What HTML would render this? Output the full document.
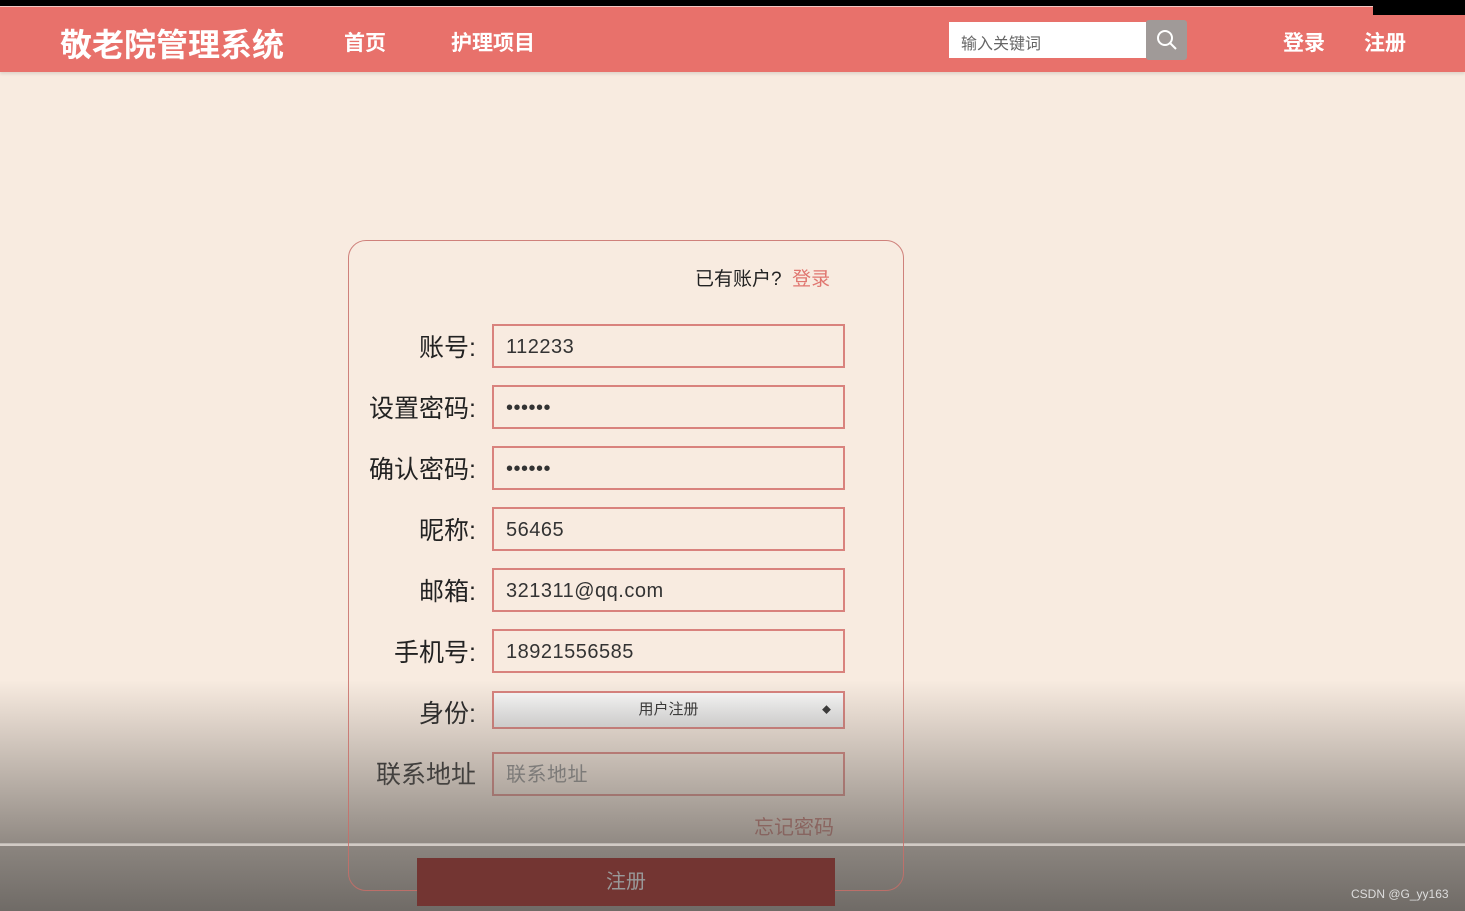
<!DOCTYPE html>
<html><head><meta charset="utf-8"><style>
*{margin:0;padding:0;box-sizing:border-box}
body{width:1465px;height:911px;overflow:hidden;background:#f8ebe0;font-family:"Liberation Sans","Noto Sans CJK SC",sans-serif;position:relative}
.a{position:absolute}
.hdr{left:0;top:7px;width:1465px;height:65px;background:#e8716b;box-shadow:0 2px 3px rgba(0,0,0,.1)}
.nav{color:#fff;font-weight:bold;font-size:21px;top:27px}
.lbl{right:989px;font-size:25px;color:#222;text-align:right;white-space:nowrap}
.inp{left:492px;width:353px;height:44px;border:2px solid #d9827d;background:#f8ebe0;font-size:20px;color:#333;padding-left:12px;line-height:42px;letter-spacing:.5px}
</style></head><body>
<div class="a" style="left:0;top:0;width:1465px;height:7px;background:#000"></div>
<div class="hdr a"></div>
<div class="a" style="left:0;top:6px;width:1373px;height:1px;background:#f0c8c4"></div>
<div class="a" style="left:1373px;top:0;width:92px;height:15px;background:#000"></div>
<div class="a" style="left:60px;top:20px;color:#fff;font-weight:bold;font-size:32px">敬老院管理系统</div>
<div class="a nav" style="left:344px">首页</div>
<div class="a nav" style="left:451px">护理项目</div>
<div class="a" style="left:949px;top:22px;width:197px;height:36px;background:#fff;font-size:16px;color:#666;padding:8px 12px">输入关键词</div>
<div class="a" style="left:1146px;top:20px;width:41px;height:40px;background:#a09a98;border-radius:3px">
<svg width="41" height="40" viewBox="0 0 41 40"><circle cx="19" cy="18" r="7" fill="none" stroke="#fff" stroke-width="2"/><line x1="24" y1="23" x2="30" y2="29" stroke="#fff" stroke-width="2"/></svg></div>
<div class="a nav" style="left:1283px">登录</div>
<div class="a nav" style="left:1364px">注册</div>

<div class="a" style="left:695px;top:264px;font-size:19px;color:#222">已有账户?&nbsp; <span style="color:#e07670">登录</span></div>

<div class="a lbl" style="top:328px">账号:</div>
<div class="a inp" style="top:324px">112233</div>
<div class="a lbl" style="top:389px">设置密码:</div>
<div class="a inp" style="top:385px">••••••</div>
<div class="a lbl" style="top:450px">确认密码:</div>
<div class="a inp" style="top:446px">••••••</div>
<div class="a lbl" style="top:511px">昵称:</div>
<div class="a inp" style="top:507px">56465</div>
<div class="a lbl" style="top:572px">邮箱:</div>
<div class="a inp" style="top:568px">321311@qq.com</div>
<div class="a lbl" style="top:633px">手机号:</div>
<div class="a inp" style="top:629px">18921556585</div>
<div class="a lbl" style="top:694px">身份:</div>
<div class="a" style="left:492px;top:691px;width:353px;height:38px;border:2px solid #d9827d;background:linear-gradient(#fafafa,#e6e6e6);font-size:15px;color:#333;text-align:center;line-height:34px">用户注册<span style="position:absolute;right:12px;font-size:9px;line-height:34px">◆</span></div>
<div class="a lbl" style="top:755px">联系地址</div>
<div class="a inp" style="top:752px;color:#888;padding-left:12px">联系地址</div>
<div class="a" style="left:754px;top:811px;font-size:20px;color:#c05a55">忘记密码</div>

<div class="a" style="left:0;top:680px;width:1465px;height:164px;background:linear-gradient(rgba(110,105,100,0),rgba(110,105,100,.75))"></div>
<div class="a" style="left:0;top:843px;width:1465px;height:3px;background:rgba(200,195,190,.8)"></div>
<div class="a" style="left:0;top:846px;width:1465px;height:65px;background:linear-gradient(rgba(120,115,110,.85),rgba(100,96,92,.92))"></div>
<div class="a" style="left:348px;top:240px;width:556px;height:651px;border:1.5px solid rgba(200,110,105,.85);border-radius:18px"></div>
<div class="a" style="left:417px;top:858px;width:418px;height:48px;background:#733532;color:#999;font-size:20px;text-align:center;line-height:48px">注册</div>
<div class="a" style="left:1351px;top:887px;font-size:12px;color:#ddd">CSDN @G_yy163</div>
</body></html>
